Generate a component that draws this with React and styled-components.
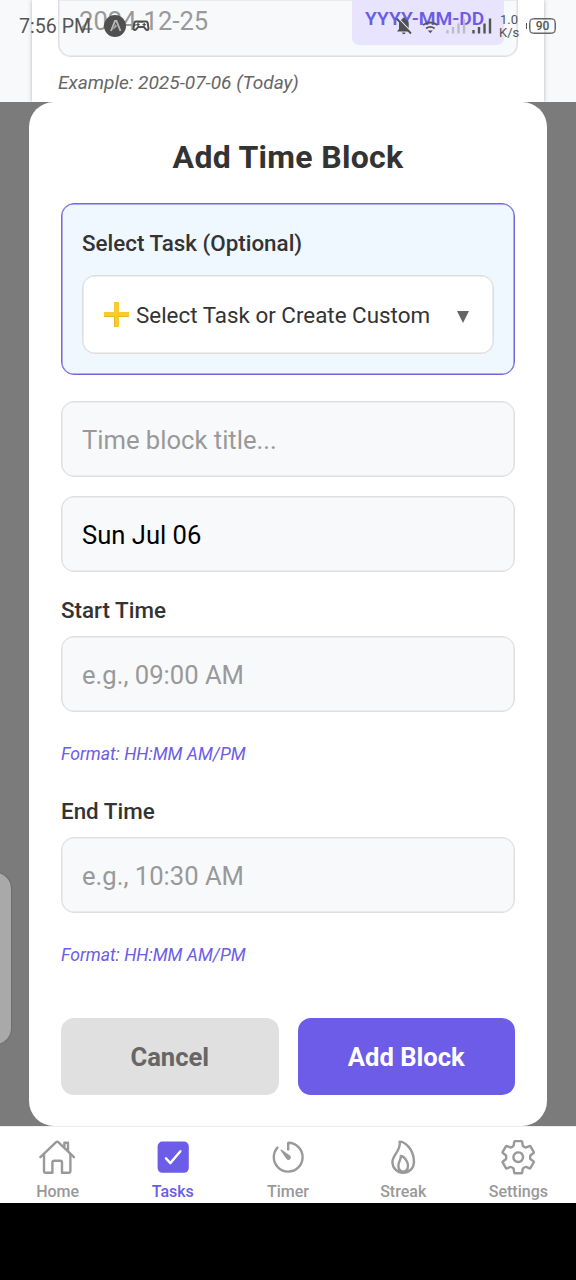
import React from "react";
import styled, { createGlobalStyle } from "styled-components";
import {
  IoHomeOutline,
  IoCheckbox,
  IoTimerOutline,
  IoFlameOutline,
  IoSettingsOutline,
} from "react-icons/io5";

const Global = createGlobalStyle`
  * { box-sizing: border-box; }
  body { margin: 0; font-family: Roboto, "Liberation Sans", sans-serif; }
  button { font-family: inherit; border: 0; }
`;

const Screen = styled.div`
  position: relative;
  width: 576px;
  height: 1280px;
  overflow: hidden;
  display: flex;
  flex-direction: column;
  background: #000;
`;

const Page = styled.div`
  height: 102px;
  padding: 0 32px;
  background: #f7f9fb;
`;

const PageCard = styled.div`
  height: 102px;
  padding: 0 26px;
  background: #fff;
  box-shadow: 0 0 4px rgba(0, 0, 0, 0.28);
  clip-path: inset(0 -6px 0 -6px);
`;

const DateField = styled.div`
  height: 57px;
  display: flex;
  justify-content: space-between;
  padding: 0 13px 12px 20px;
  border: 1px solid #dddfe2;
  border-top: 0;
  border-radius: 0 0 13px 13px;
  box-shadow: inset 0 0 0 0.5px #dddfe2;
  background: #f8f9fb;
`;

const DateValue = styled.span`
  font-size: 25.6px;
  line-height: 30px;
  padding-top: 6px;
  color: #999;
`;

const FormatTag = styled.span`
  width: 152px;
  height: 45px;
  padding: 8px 0 0 13px;
  border-radius: 0 0 7px 7px;
  background: #e8e4fd;
  color: #6c5ce7;
  font-size: 19.2px;
  line-height: 22px;
  font-weight: 600;
  white-space: nowrap;
`;

const Example = styled.p`
  margin: 14px 0 0;
  font-size: 19.1px;
  line-height: 23px;
  font-style: italic;
  color: #666;
`;

const Overlay = styled.div`
  height: 1024px;
  padding: 0 29px;
  background: #7b7b7b;
`;

const Modal = styled.form`
  height: 1024px;
  padding: 36px 32px 0;
  border-radius: 25px;
  background: #fff;
  display: flex;
  flex-direction: column;
`;

const Title = styled.h1`
  margin: 0 0 27px;
  font-size: 32px;
  line-height: 38px;
  font-weight: 700;
  letter-spacing: 0.3px;
  text-align: center;
  color: #333;
`;

const TaskPanel = styled.section`
  height: 172px;
  margin-bottom: 26px;
  padding: 26px 20px 0;
  border: 1px solid #7565dc;
  border-radius: 13px;
  box-shadow: inset 0 0 0 0.5px #7565dc;
  background: #eff7ff;
`;

const Label = styled.label`
  display: block;
  height: 26px;
  margin-bottom: ${(p) => p.$gap}px;
  line-height: 26px;
  font-size: 22.4px;
  font-weight: 500;
  color: #333;
`;

const Select = styled.div`
  height: 79px;
  padding: 0 22px 0 21px;
  display: flex;
  align-items: center;
  border: 1px solid #dddddf;
  border-radius: 13px;
  box-shadow: inset 0 0 0 0.5px #dddddf;
  background: #fff;
  color: #333;
  font-size: 22.4px;
  white-space: nowrap;
`;

const PlusIcon = styled.svg`
  width: 25px;
  height: 25px;
  margin-right: 7px;
`;

const Caret = styled.svg`
  width: 12px;
  height: 12px;
  margin: 5px 2px 0 auto;
`;

const Field = styled.div`
  height: 76px;
  margin-bottom: ${(p) => p.$gap}px;
  padding: 2px 20px 0;
  display: flex;
  align-items: center;
  border: 1px solid #dddfe1;
  border-radius: 13px;
  box-shadow: inset 0 0 0 0.5px #dddfe1;
  background: #f8f9fb;
  font-size: 25.6px;
  color: ${(p) => (p.$filled ? "#000" : "#999")};
`;

const Hint = styled.p`
  margin: 0 0 ${(p) => p.$gap}px;
  font-size: 17.6px;
  line-height: 22px;
  font-style: italic;
  color: #6c5ce7;
`;

const Actions = styled.div`
  display: grid;
  grid-template-columns: 1fr 1fr;
  gap: 19px;
`;

const Button = styled.button`
  height: 77px;
  padding: 0;
  border-radius: 13px;
  font-size: 25.6px;
  font-weight: 700;
  background: ${(p) => (p.$primary ? "#6c5ce7" : "#e0e0e0")};
  color: ${(p) => (p.$primary ? "#fff" : "#666")};
`;

const TabBar = styled.nav`
  height: 77px;
  display: grid;
  grid-template-columns: repeat(5, 1fr);
  border-top: 1px solid #ededed;
  background: #fff;
`;

const Tab = styled.div`
  display: flex;
  flex-direction: column;
  align-items: center;
  padding-top: 10.5px;
  font-size: 16px;
  line-height: 19px;
  font-weight: 500;
  color: ${(p) => (p.$active ? "#6c5ce7" : "#999")};
  svg {
    width: 38.4px;
    height: 38.4px;
    margin-bottom: 6px;
  }
`;

const EdgeHandle = styled.div`
  position: absolute;
  left: -20px;
  top: 873px;
  width: 31px;
  height: 171px;
  border-radius: 20px;
  background: #a9a9a9;
  box-shadow: 0 0 2px rgba(0, 0, 0, 0.35);
`;

const StatusBar = styled.div`
  position: absolute;
  inset: 0 0 auto;
  height: 52px;
  padding: 0 20px 0 19px;
  display: flex;
  align-items: center;
  color: #555;
`;

const Clock = styled.span`
  width: 85px;
  font-size: 19.6px;
  white-space: nowrap;
`;

const StatusLeft = styled.svg`
  width: 48px;
  height: 26px;
`;

const StatusRight = styled.svg`
  width: 100px;
  height: 26px;
  margin-left: auto;
`;

const Speed = styled.span`
  display: flex;
  flex-direction: column;
  width: 20px;
  margin: 0 7px 0 5px;
  font-size: 13px;
  line-height: 13px;
  text-align: center;
  white-space: nowrap;
`;

const Battery = styled.span`
  display: flex;
  align-items: center;
  gap: 2px;
  &::before {
    content: "";
    width: 1px;
    height: 6px;
    background: #555;
  }
`;

const BatteryBody = styled.span`
  width: 27px;
  height: 16px;
  border: 1.5px solid #666;
  box-shadow: inset 0 0 0 0.5px #666;
  border-radius: 4.5px;
  font-size: 12px;
  line-height: 14px;
  font-weight: 500;
  text-align: center;
`;

const tabs = [
  ["Home", IoHomeOutline],
  ["Tasks", IoCheckbox],
  ["Timer", IoTimerOutline],
  ["Streak", IoFlameOutline],
  ["Settings", IoSettingsOutline],
];

function SystemStatus() {
  return (
    <StatusBar>
      <Clock>7:56 PM</Clock>
      <StatusLeft viewBox="104 13 48 26">
        <circle cx="115" cy="26" r="11" fill="#505050" />
        <path d="M111 31L115 21h1.500l4 10" fill="none" stroke="#b9b9b9" strokeWidth="1.8" />
        <path d="M112.5 30l3-6 1.500 2.500z" fill="#aaa" />
        <path
          d="M136 21.500h10q1.500 0 1.700 1.500l.8 5.500c0 1.800-1.800 1.800-2.800.6l-1.800-2h-5.800l-1.800 2c-1 1.200-2.800 1.200-2.800-.6l.8-5.500q.2-1.500 1.700-1.500z"
          fill="none"
          stroke="#505050"
          strokeWidth="2"
          strokeLinejoin="round"
        />
        <path d="M136.300 24.700h3.400M138 23v3.400M142.500 24.700h3.400M144.200 23v3.400" stroke="#505050" strokeWidth="1.300" />
      </StatusLeft>
      <StatusRight viewBox="394 13 100 26">
        <path
          d="M397 31.500l2-2.500v-5q0-4 3.600-5v-1.200h2.400v1.200q3.700 1 3.700 5v5l1.800 2.500zM402 32.500h3.600q-.3 1.700-1.800 1.700t-1.800-1.700"
          fill="#505050"
        />
        <path d="M397.500 17.500l14 14.500" stroke="#e8e4fd" strokeWidth="1.200" />
        <path d="M396.500 18.500l14.500 15" stroke="#505050" strokeWidth="1.800" />
        <path d="M423 25q7.300-5 14.600 0M426 28.500q4.300-3.200 8.600 0" fill="none" stroke="#555" strokeWidth="1.800" />
        <path d="M427.800 30.500h5l-2.500 2.800z" fill="#555" />
        <path d="M447.500 33.500v-3.500M453 33.500v-6.500M458.500 33.500v-10M464 33.500v-14.500" stroke="#bdbbc9" strokeWidth="2.400" />
        <path d="M473.500 33.500v-3.500M479 33.500v-6.500M484.500 33.500v-10M490 33.500v-15" stroke="#555" strokeWidth="2.400" />
      </StatusRight>
      <Speed>
        <span>1.0</span>
        <span>K/s</span>
      </Speed>
      <Battery>
        <BatteryBody>90</BatteryBody>
      </Battery>
    </StatusBar>
  );
}

export default function App() {
  return (
    <Screen>
      <Global />
      <Page>
        <PageCard>
          <DateField>
            <DateValue>2024-12-25</DateValue>
            <FormatTag>YYYY-MM-DD</FormatTag>
          </DateField>
          <Example>Example: 2025-07-06 (Today)</Example>
        </PageCard>
      </Page>
      <Overlay>
        <Modal>
          <Title>Add Time Block</Title>
          <TaskPanel>
            <Label $gap={19}>Select Task (Optional)</Label>
            <Select>
              <PlusIcon viewBox="0 0 25 25">
                <path d="M10 0h5v10h10v5H15v10h-5V15H0v-5h10z" fill="#fbcb2d" />
                <path d="M0 14.500h10.500V25M15 14.500h10" fill="none" stroke="#eab42c" strokeWidth="1" />
              </PlusIcon>
              Select Task or Create Custom
              <Caret viewBox="0 0 12 12">
                <path d="M0 0h12L6 12z" fill="#666" />
              </Caret>
            </Select>
          </TaskPanel>
          <Field $gap={19}>Time block title...</Field>
          <Field $gap={25} $filled>Sun Jul 06</Field>
          <Label $gap={13}>Start Time</Label>
          <Field $gap={31}>e.g., 09:00 AM</Field>
          <Hint $gap={33}>Format: HH:MM AM/PM</Hint>
          <Label $gap={13}>End Time</Label>
          <Field $gap={31}>e.g., 10:30 AM</Field>
          <Hint $gap={52}>Format: HH:MM AM/PM</Hint>
          <Actions>
            <Button type="button">Cancel</Button>
            <Button type="button" $primary>Add Block</Button>
          </Actions>
        </Modal>
      </Overlay>
      <TabBar>
        {tabs.map(([name, Icon]) => (
          <Tab key={name} $active={name === "Tasks"}>
            <Icon />
            {name}
          </Tab>
        ))}
      </TabBar>
      <EdgeHandle />
      <SystemStatus />
    </Screen>
  );
}
